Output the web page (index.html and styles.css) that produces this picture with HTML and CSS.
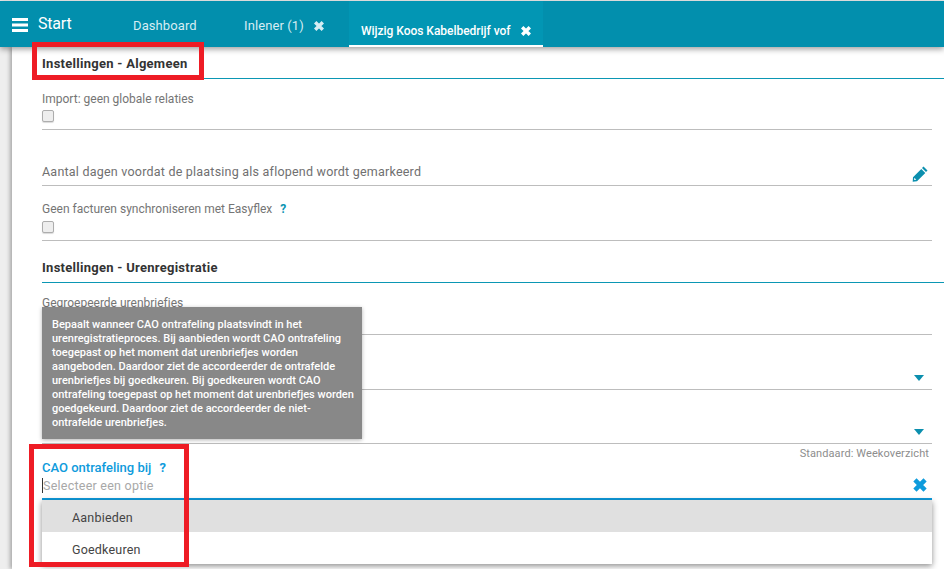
FILE: index.html
```html
<!DOCTYPE html>
<html lang="nl">
<head>
<meta charset="utf-8">
<title>Wijzig Koos Kabelbedrijf vof</title>
<link rel="stylesheet" href="styles.css">
</head>
<body>
<header class="topbar">
  <div class="brand">
    <svg class="bars" viewBox="0 0 16 14"><path d="M0 0h16v3H0zM0 5.500h16v3H0zM0 11h16v3H0z"/></svg>
    <span>Start</span>
  </div>
  <nav class="tabs">
    <div class="tab tab-dash">Dashboard</div>
    <div class="tab tab-inl">Inlener (1)
      <svg class="x" viewBox="0 0 12 12"><path d="M2.200 2.200l7.600 7.600M9.800 2.200l-7.600 7.600"/></svg>
    </div>
    <div class="tab tab-active">Wijzig Koos Kabelbedrijf vof
      <svg class="x" viewBox="0 0 12 12"><path d="M2.200 2.200l7.600 7.600M9.800 2.200l-7.600 7.600"/></svg>
    </div>
  </nav>
</header>

<main class="sheet">
  <div class="wrap">
    <h2 class="sec sec-1">Instellingen - Algemeen</h2>

    <section class="field f-import">
      <label class="lbl">Import: geen globale relaties</label>
      <span class="check"></span>
    </section>

    <section class="field f-days">
      <span class="value">Aantal dagen voordat de plaatsing als aflopend wordt gemarkeerd</span>
      <svg class="pencil" viewBox="0 0 16 16"><path d="M11.500.6l4 4-1.500 1.500-4-4zM9.300 2.900l4 4L5 15.200l-4.300.5.300-4.500zM2.400 11.700l-.3 2.300 2.200-.3z" fill-rule="evenodd"/></svg>
    </section>

    <section class="field f-sync">
      <label class="lbl">Geen facturen synchroniseren met Easyflex <b class="q">?</b></label>
      <span class="check"></span>
    </section>

    <h2 class="sec sec-2">Instellingen - Urenregistratie</h2>

    <section class="field f-group">
      <label class="lbl">Gegroepeerde urenbriefjes</label>
    </section>

    <section class="field f-sel1"><span class="caret"></span></section>
    <section class="field f-sel2"><span class="caret"></span></section>

    <section class="field f-cao">
      <div class="hint">Standaard: Weekoverzicht</div>
      <label class="lbl lbl-on">CAO ontrafeling bij <b class="q q-on">?</b></label>
      <div class="cao-input">
        <span class="cursor"></span><span class="ph">Selecteer een optie</span>
        <svg class="x x-big" viewBox="0 0 12 12"><path d="M2.200 2.200l7.600 7.600M9.800 2.200l-7.600 7.600"/></svg>
      </div>
      <ul class="menu">
        <li class="opt opt-on">Aanbieden</li>
        <li class="opt">Goedkeuren</li>
      </ul>
    </section>
  </div>

  <div class="tip">Bepaalt wanneer CAO ontrafeling plaatsvindt in het urenregistratieproces. Bij aanbieden wordt CAO ontrafeling toegepast op het moment dat urenbriefjes worden aangeboden. Daardoor ziet de accordeerder de ontrafelde urenbriefjes bij goedkeuren. Bij goedkeuren wordt CAO ontrafeling toegepast op het moment dat urenbriefjes worden goedgekeurd. Daardoor ziet de accordeerder de niet-ontrafelde urenbriefjes.</div>
</main>

<div class="mark mark-1"></div>
<div class="mark mark-2"></div>
</body>
</html>
```
FILE: styles.css
```css
* { box-sizing: border-box; }
html, body { height: 100%; }
body {
  margin: 0;
  position: relative;
  height: 569px;
  overflow: hidden;
  background: #eeeeee;
  font-family: Roboto, "Liberation Sans", sans-serif;
  color: #757575;
}
.topbar {
  position: relative;
  z-index: 3;
  height: 46px;
  margin-top: 1px;
  background: #028fad;
  display: flex;
  color: #fff;
  box-shadow: 0 2px 6px rgba(0,0,0,.4);
}
.brand {
  width: 133px;
  padding: 9px 0 0 12px;
  display: flex;
  align-items: flex-start;
  gap: 10px;
  font-size: 16px;
  letter-spacing: -.2px;
  height: 46px;
}
.brand span { line-height: 28px; }
.bars { width: 16px; height: 14px; margin-top: 8px; fill: #fff; }
.tabs { display: flex; }
.tab {
  height: 46px;
  font-size: 13px;
  letter-spacing: .1px;
  color: #d6edf3;
  display: flex;
  align-items: flex-start;
  padding-top: 17px;
  line-height: 16px;
  white-space: nowrap;
}
.tab-dash { width: 111px; }
.tab-inl { width: 105px; gap: 9px; }
.tab-active {
  width: 194px;
  padding: 22px 0 0 12px;
  gap: 9px;
  font-size: 12px;
  font-weight: 500;
  letter-spacing: -.03px;
  color: #fff;
  background: #0296b4;
  border-bottom: 2px solid #fff;
}
.x { width: 12px; height: 12px; margin-top: 2px; fill: none; stroke: #d6edf3; stroke-width: 3.4; }
.tab-active .x { stroke: #fff; }
.sheet {
  position: relative;
  margin-left: 12px;
  height: 522px;
  background: #fff;
  box-shadow: -2px 0 4px rgba(0,0,0,.3);
}
.wrap { padding-left: 30px; }
.sec {
  margin: 0;
  font-size: 13px;
  font-weight: 700;
  letter-spacing: .27px;
  color: #333;
  border-bottom: 1px solid #0b97b4;
  line-height: 16px;
}
.sec-1 { height: 32px; padding-top: 9px; }
.sec-2 { height: 42px; padding-top: 19px; }
.field {
  position: relative;
  margin-right: 12px;
  border-bottom: 1px solid #bdbdbd;
}
.lbl { display: block; font-size: 12px; line-height: 14px; color: #757575; }
.f-import { height: 51px; padding-top: 13px; }
.f-import .check { margin-top: 4px; }
.f-days { height: 56px; padding-top: 34px; }
.f-sync { height: 55px; padding-top: 16px; }
.f-group { height: 52px; padding-top: 13px; }
.f-sel1 { height: 55px; }
.f-sel2 { height: 54px; }
.f-cao { height: 56px; border-bottom: 2px solid #0e9bdc; }
.check {
  display: block;
  width: 12px;
  height: 12px;
  margin-top: 5px;
  background: #eee;
  border: 1px solid #adadad;
  border-radius: 2px;
  box-shadow: 0 1px 1px rgba(0,0,0,.15);
}
.value { display: block; font-size: 12.500px; line-height: 16px; letter-spacing: .22px; color: #707070; }
.q { color: #0a94b2; font-weight: 700; margin-left: 5px; }
.q-on { color: #0e9bdc; }
.pencil { position: absolute; right: 4px; top: 36px; width: 16px; height: 16px; fill: #0b8fae; }
.caret {
  position: absolute;
  right: 8px;
  bottom: 8px;
  width: 0;
  height: 0;
  border-left: 5px solid transparent;
  border-right: 5px solid transparent;
  border-top: 6px solid #0b8fae;
}
.hint {
  font-size: 11px;
  line-height: 13px;
  letter-spacing: .1px;
  color: #8d8d8d;
  text-align: right;
  padding: 3px 3px 0 0;
}
.lbl-on { font-size: 13px; font-weight: 500; color: #0e9bdc; margin-top: 0; line-height: 16px; }
.cao-input { display: flex; align-items: center; height: 20px; font-size: 12.500px; letter-spacing: .24px; color: #a8a8a8; margin-top: -1px; }
.cursor { width: 1px; height: 15px; background: #333; }
.x-big { position: absolute; right: 4px; top: 33px; width: 16px; height: 16px; margin: 0; stroke: #0e9bdc; }
.menu {
  position: absolute;
  left: 0;
  right: 0;
  top: 100%;
  margin: 2px 0 0;
  padding: 0;
  list-style: none;
  background: #fff;
  box-shadow: 0 2px 6px rgba(0,0,0,.45);
  z-index: 2;
}
.opt { height: 32px; padding-left: 30px; font-size: 12.500px; line-height: 35px; letter-spacing: .2px; color: #444; }
.opt-on { background: #e0e0e0; }
.tip {
  position: absolute;
  left: 30px;
  top: 260px;
  width: 320px;
  height: 132px;
  padding: 11px 5px 10px 10px;
  background: #888888;
  color: #fff;
  font-size: 11px;
  font-weight: 500;
  line-height: 14px;
  box-shadow: 0 1px 4px rgba(0,0,0,.3);
  z-index: 2;
}
.mark { position: absolute; border: 5px solid #ee1c25; z-index: 5; }
.mark-1 { left: 32px; top: 42px; width: 172px; height: 38px; }
.mark-2 { left: 29px; top: 444px; width: 160px; height: 123px; }
```
